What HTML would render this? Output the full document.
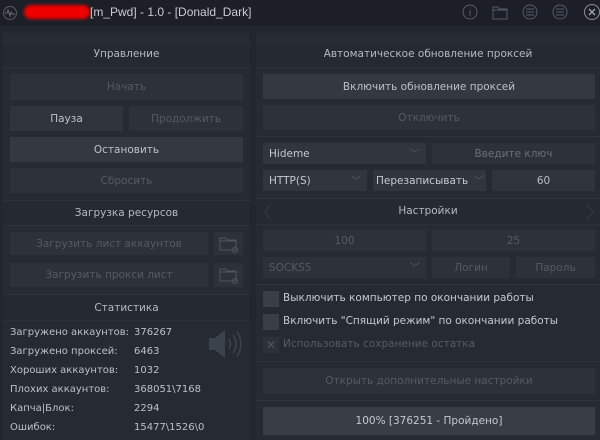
<!DOCTYPE html>
<html><head><meta charset="utf-8"><style>
*{margin:0;padding:0;box-sizing:border-box}
body{width:600px;height:440px;background:#22262e;font-family:"DejaVu Sans","Liberation Sans",sans-serif;font-size:10.5px;color:#b9bec6;position:relative;overflow:hidden}
.a{position:absolute}
.tb{left:0;top:0;width:600px;height:26px;background:#1c1f27}
.p{background:#262b33}
.h{background:#252a32;border-top:1px solid #2d323a;border-bottom:1px solid #2d323a;text-align:center;color:#b4bac2}
.b{background:#2d3239;text-align:center;color:#555b63;display:flex;align-items:center;justify-content:center}
.e{background:#343941;color:#bcc1c8}
.e2{background:#30353d;color:#bcc1c8}
.f{background:#2d3239;display:flex;align-items:center;justify-content:space-between;padding:0 6px;color:#c4c9cf}
.ln{height:1px;background:#2f343c}
.st{left:10px;color:#bcc1c8;font-size:10px}
.sv{left:134px;color:#bcc1c8;font-size:10px}
.cb{width:16px;height:16px;background:#3a3f47}
.ct{color:#c4c9cf}
</style></head><body>
<div class="a tb"></div>
<svg class="a" style="left:2px;top:5px" width="16" height="16"><circle cx="8" cy="8" r="6.5" fill="none" stroke="#555b66"/><path d="M3 8h2l1-3 2 6 1-4 1 2h3" fill="none" stroke="#666c77"/></svg>
<div class="a" style="left:24px;top:5px;width:66px;height:14px;background:#e00;border-radius:7px;filter:blur(1.5px)"></div>
<div class="a" style="left:90px;top:5px;color:#c8ccd2;font-size:12px;font-family:'Liberation Sans',sans-serif">[m_Pwd] - 1.0 - [Donald_Dark]</div>
<svg class="a" style="left:460px;top:3px" width="140" height="20" fill="none" stroke="#555c68" stroke-width="1">
<circle cx="10" cy="9" r="7"/><path d="M10 7v6M10 4.5v1"/>
<path d="M33 4h5l1 2h8v10H33z M33 7h14"/>
<circle cx="70" cy="9" r="7"/><path d="M66 6h8M66 9h8M66 12h8"/>
<circle cx="100" cy="9" r="7"/><path d="M96 6h8M96 9h8M96 12h8"/>
<circle cx="132" cy="9" r="7.5" stroke="#8a9099"/><path d="M129 6l6 6M135 6l-6 6" stroke="#9aa0a8" stroke-width="1.5"/>
</svg>

<div class="a p" style="left:3px;top:33px;width:247px;height:407px"></div>
<div class="a p" style="left:256px;top:33px;width:344px;height:407px"></div>

<div class="a h" style="left:3px;top:41px;width:247px;height:27px;line-height:25px">Управление</div>
<div class="a b" style="left:10px;top:74px;width:233px;height:26px">Начать</div>
<div class="a b e2" style="left:10px;top:106px;width:113px;height:25px">Пауза</div>
<div class="a b" style="left:129px;top:106px;width:114px;height:25px">Продолжить</div>
<div class="a b e" style="left:10px;top:137px;width:233px;height:25px">Остановить</div>
<div class="a b" style="left:10px;top:168px;width:233px;height:25px">Сбросить</div>
<div class="a h" style="left:3px;top:200px;width:247px;height:26px;line-height:24px">Загрузка ресурсов</div>
<div class="a b" style="left:10px;top:232px;width:198px;height:23px">Загрузить лист аккаунтов</div>
<div class="a b" style="left:214px;top:232px;width:29px;height:23px"></div>
<div class="a b" style="left:10px;top:263px;width:198px;height:24px">Загрузить прокси лист</div>
<div class="a b" style="left:214px;top:263px;width:29px;height:24px"></div>
<svg class="a" style="left:219px;top:236px" width="20" height="50" fill="none" stroke="#4f555e"><path d="M1 2h6l1 2h9v10H1z M1 5h16"/><circle cx="16" cy="14" r="2.5"/><path d="M1 33h6l1 2h9v10H1z M1 36h16"/><circle cx="16" cy="45" r="2.5"/></svg>
<div class="a h" style="left:3px;top:294px;width:247px;height:27px;line-height:26px">Статистика</div>
<div class="a st" style="top:327px">Загружено аккаунтов:</div><div class="a sv" style="top:327px">376267</div>
<div class="a st" style="top:346px">Загружено проксей:</div><div class="a sv" style="top:346px">6463</div>
<div class="a st" style="top:365px">Хороших аккаунтов:</div><div class="a sv" style="top:365px">1032</div>
<div class="a st" style="top:384px">Плохих аккаунтов:</div><div class="a sv" style="top:384px">368051\7168</div>
<div class="a st" style="top:403px">Капча|Блок:</div><div class="a sv" style="top:403px">2294</div>
<div class="a st" style="top:422px">Ошибок:</div><div class="a sv" style="top:422px">15477\1526\0</div>
<svg class="a" style="left:207px;top:328px" width="36" height="32"><path d="M2 10h6l10-8v28l-10-8H2z" fill="#3c424b"/><path d="M22 11q3 5 0 10M26 7q6 9 0 18M30 4q8 12 0 24" fill="none" stroke="#3c424b" stroke-width="1.5"/></svg>

<div class="a h" style="left:256px;top:41px;width:344px;height:27px;line-height:25px">Автоматическое обновление проксей</div>
<div class="a b e" style="left:263px;top:74px;width:332px;height:25px">Включить обновление проксей</div>
<div class="a b" style="left:263px;top:105px;width:332px;height:25px">Отключить</div>
<div class="a ln" style="left:256px;top:136px;width:344px"></div>
<div class="a f" style="left:263px;top:143px;width:163px;height:21px;background:#31363e">Hideme<span style="color:#555b63">﹀</span></div>
<div class="a b" style="left:432px;top:143px;width:163px;height:21px;color:#6a7078">Введите ключ</div>
<div class="a f" style="left:263px;top:170px;width:104px;height:21px;background:#31363e">HTTP(S)<span style="color:#555b63">﹀</span></div>
<div class="a f" style="left:373px;top:170px;width:113px;height:21px;background:#31363e;padding:0 2px 0 3px">Перезаписывать<span style="color:#555b63">﹀</span></div>
<div class="a b" style="left:492px;top:170px;width:103px;height:21px;color:#b9bec6;background:#30353d">60</div>
<div class="a h" style="left:256px;top:198px;width:344px;height:27px;line-height:25px">Настройки</div>
<svg class="a" style="left:264px;top:203px" width="330" height="18" fill="none" stroke="#343a43" stroke-width="1.2"><path d="M7 1l-6 8 6 8"/><path d="M323 1l6 8-6 8"/></svg>
<div class="a b" style="left:263px;top:230px;width:163px;height:21px">100</div>
<div class="a b" style="left:432px;top:230px;width:163px;height:21px">25</div>
<div class="a f" style="left:263px;top:257px;width:163px;height:21px;color:#555b63">SOCKS5<span>﹀</span></div>
<div class="a b" style="left:432px;top:257px;width:78px;height:21px">Логин</div>
<div class="a b" style="left:516px;top:257px;width:79px;height:21px">Пароль</div>
<div class="a ln" style="left:256px;top:284px;width:344px"></div>
<div class="a cb" style="left:263px;top:291px"></div><div class="a ct" style="left:283px;top:292px">Выключить компьютер по окончании работы</div>
<div class="a cb" style="left:263px;top:314px"></div><div class="a ct" style="left:283px;top:315px">Включить "Спящий режим" по окончании работы</div>
<div class="a cb" style="left:263px;top:337px;background:#2d3239;color:#50565f;text-align:center;line-height:16px;font-size:12px">✕</div><div class="a" style="left:283px;top:338px;color:#555b63">Использовать сохранение остатка</div>
<div class="a ln" style="left:256px;top:361px;width:344px"></div>
<div class="a b" style="left:263px;top:368px;width:332px;height:26px">Открыть дополнительные настройки</div>
<div class="a ln" style="left:256px;top:400px;width:344px"></div>
<div class="a b" style="left:263px;top:407px;width:332px;height:28px;background:#393e46;color:#c4c9cf">100% [376251 - Пройдено]</div>
</body></html>
